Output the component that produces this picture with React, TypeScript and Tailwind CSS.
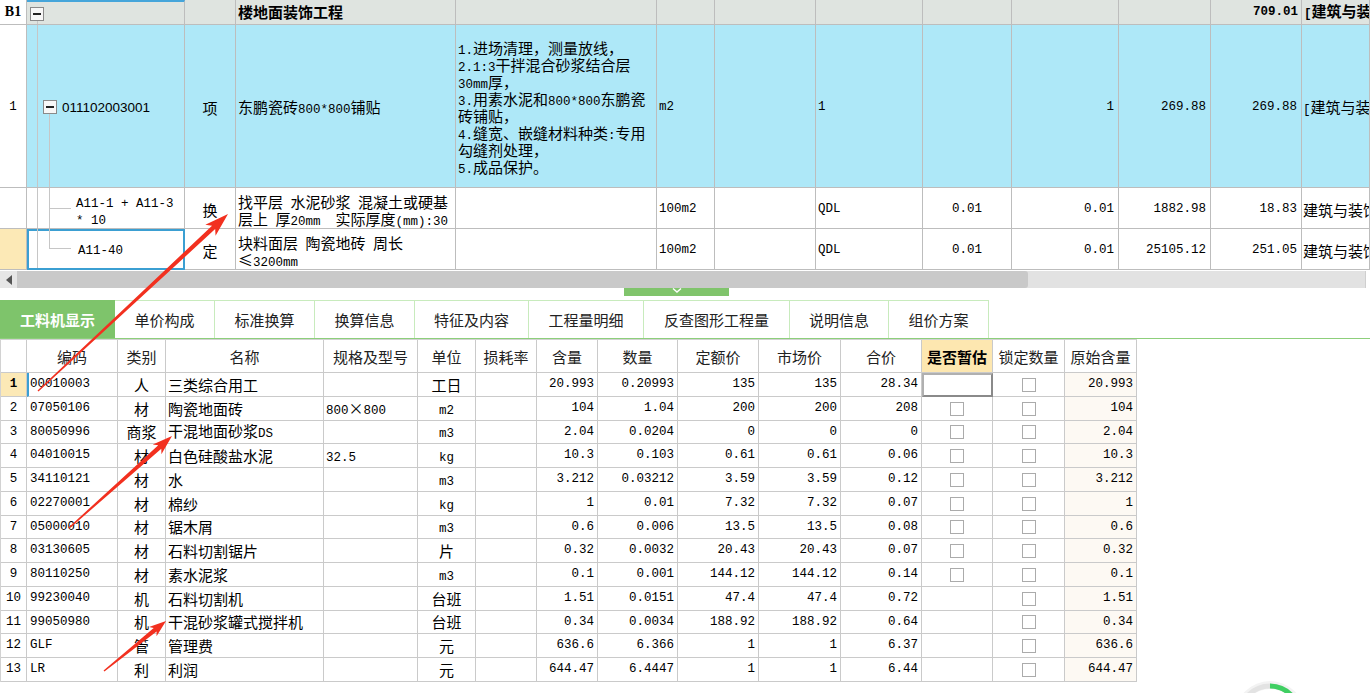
import React from "react";

const B = "border-r border-b border-[#bdbdbd]";
const BB = "border-r border-b border-[#cacaca]";

function Mx({ s, bold }: { s: string; bold?: boolean }) {
  const parts = s.match(/[\x20-\x7e]+|[^\x20-\x7e]+/g) || [];
  return (
    <span className="whitespace-pre">
      {parts.map((p, i) =>
        /^[\x20-\x7e]+$/.test(p) ? (
          <span
            key={i}
            className={
              bold
                ? "font-['Liberation_Mono',monospace] text-[12.5px] whitespace-pre font-bold"
                : "font-['Liberation_Mono',monospace] text-[12.5px] whitespace-pre"
            }
          >
            {p}
          </span>
        ) : (
          <span
            key={i}
            className={
              bold
                ? "font-['Noto_Sans_CJK_SC',sans-serif] text-[15px] font-bold"
                : "font-['Noto_Sans_CJK_SC',sans-serif] text-[15px]"
            }
          >
            {p}
          </span>
        )
      )}
    </span>
  );
}

function MinusBox() {
  return (
    <div className="w-[14px] h-[14px] border border-[#8a8a8a] bg-[#f7f7f7] flex items-center justify-center">
      <div className="w-[8px] h-[1.5px] bg-[#222]" />
    </div>
  );
}

function Arrow({ x1, y1, x2, y2, hl, hw }: { x1: number; y1: number; x2: number; y2: number; hl: number; hw: number }) {
  const dx = x2 - x1;
  const dy = y2 - y1;
  const L = Math.hypot(dx, dy);
  const ux = dx / L;
  const uy = dy / L;
  const nx = -uy;
  const ny = ux;
  const bx = x2 - ux * hl;
  const by = y2 - uy * hl;
  const nbx = x2 - ux * hl * 0.82;
  const nby = y2 - uy * hl * 0.82;
  const w0 = 1.4;
  const w1 = 4.6;
  const pts = [
    [x1 + (nx * w0) / 2, y1 + (ny * w0) / 2],
    [nbx + (nx * w1) / 2, nby + (ny * w1) / 2],
    [bx + (nx * hw) / 2, by + (ny * hw) / 2],
    [x2, y2],
    [bx - (nx * hw) / 2, by - (ny * hw) / 2],
    [nbx - (nx * w1) / 2, nby - (ny * w1) / 2],
    [x1 - (nx * w0) / 2, y1 - (ny * w0) / 2],
  ]
    .map((p) => p.join(","))
    .join(" ");
  return <polygon points={pts} fill="#f2301f" />;
}

function Check() {
  return <div className="w-[14px] h-[14px] border border-[#ababab] bg-white" />;
}

type Row = {
  n: string;
  code: string;
  t: string;
  name: string;
  spec: string;
  unit: string;
  hl: string;
  qty: string;
  de: string;
  sc: string;
  hj: string;
  zg: "focus" | "box" | "none";
  ys: string;
  h: "a" | "b";
};

const rows: Row[] = [
  { n: "1", code: "00010003", t: "人", name: "三类综合用工", spec: "", unit: "工日", hl: "20.993", qty: "0.20993", de: "135", sc: "135", hj: "28.34", zg: "focus", ys: "20.993", h: "a" },
  { n: "2", code: "07050106", t: "材", name: "陶瓷地面砖", spec: "800×800", unit: "m2", hl: "104", qty: "1.04", de: "200", sc: "200", hj: "208", zg: "box", ys: "104", h: "a" },
  { n: "3", code: "80050996", t: "商浆", name: "干混地面砂浆DS", spec: "", unit: "m3", hl: "2.04", qty: "0.0204", de: "0", sc: "0", hj: "0", zg: "box", ys: "2.04", h: "b" },
  { n: "4", code: "04010015", t: "材", name: "白色硅酸盐水泥", spec: "32.5", unit: "kg", hl: "10.3", qty: "0.103", de: "0.61", sc: "0.61", hj: "0.06", zg: "box", ys: "10.3", h: "a" },
  { n: "5", code: "34110121", t: "材", name: "水", spec: "", unit: "m3", hl: "3.212", qty: "0.03212", de: "3.59", sc: "3.59", hj: "0.12", zg: "box", ys: "3.212", h: "a" },
  { n: "6", code: "02270001", t: "材", name: "棉纱", spec: "", unit: "kg", hl: "1", qty: "0.01", de: "7.32", sc: "7.32", hj: "0.07", zg: "box", ys: "1", h: "a" },
  { n: "7", code: "05000010", t: "材", name: "锯木屑", spec: "", unit: "m3", hl: "0.6", qty: "0.006", de: "13.5", sc: "13.5", hj: "0.08", zg: "box", ys: "0.6", h: "b" },
  { n: "8", code: "03130605", t: "材", name: "石料切割锯片", spec: "", unit: "片", hl: "0.32", qty: "0.0032", de: "20.43", sc: "20.43", hj: "0.07", zg: "box", ys: "0.32", h: "a" },
  { n: "9", code: "80110250", t: "材", name: "素水泥浆", spec: "", unit: "m3", hl: "0.1", qty: "0.001", de: "144.12", sc: "144.12", hj: "0.14", zg: "box", ys: "0.1", h: "a" },
  { n: "10", code: "99230040", t: "机", name: "石料切割机", spec: "", unit: "台班", hl: "1.51", qty: "0.0151", de: "47.4", sc: "47.4", hj: "0.72", zg: "none", ys: "1.51", h: "a" },
  { n: "11", code: "99050980", t: "机", name: "干混砂浆罐式搅拌机", spec: "", unit: "台班", hl: "0.34", qty: "0.0034", de: "188.92", sc: "188.92", hj: "0.64", zg: "none", ys: "0.34", h: "b" },
  { n: "12", code: "GLF", t: "管", name: "管理费", spec: "", unit: "元", hl: "636.6", qty: "6.366", de: "1", sc: "1", hj: "6.37", zg: "none", ys: "636.6", h: "a" },
  { n: "13", code: "LR", t: "利", name: "利润", spec: "", unit: "元", hl: "644.47", qty: "6.4447", de: "1", sc: "1", hj: "6.44", zg: "none", ys: "644.47", h: "a" },
];

const tabs = [
  { t: "工料机显示", w: "w-[115px]" },
  { t: "单价构成", w: "w-[100px]" },
  { t: "标准换算", w: "w-[100px]" },
  { t: "换算信息", w: "w-[100px]" },
  { t: "特征及内容", w: "w-[114px]" },
  { t: "工程量明细", w: "w-[115px]" },
  { t: "反查图形工程量", w: "w-[146px]" },
  { t: "说明信息", w: "w-[99px]" },
  { t: "组价方案", w: "w-[100px]" },
];

const headers = ["", "编码", "类别", "名称", "规格及型号", "单位", "损耗率", "含量", "数量", "定额价", "市场价", "合价", "是否暂估", "锁定数量", "原始含量"];

const features = [
  "1.进场清理，测量放线，",
  "2.1:3干拌混合砂浆结合层",
  "30mm厚，",
  "3.用素水泥和800*800东鹏瓷",
  "砖铺贴，",
  "4.缝宽、嵌缝材料种类:专用",
  "勾缝剂处理，",
  "5.成品保护。",
];

export default function App() {
  const num = "font-['Liberation_Mono',monospace] text-[12.5px] text-black";
  return (
    <div className="relative w-[1370px] h-[693px] overflow-hidden bg-white text-black leading-none">
      {/* top table */}
      <div className="grid grid-cols-[27px_158px_51px_220px_201px_58px_101px_107px_89px_107px_92px_91px_68px] grid-rows-[25px_163px_41px_41px] w-[1370px] overflow-hidden">
        {/* header */}
        <div className={`${B} bg-white flex items-center justify-center`}>
          <span className="font-['Liberation_Serif',serif] font-bold text-[14px]">B1</span>
        </div>
        <div className={`${B} relative bg-[#dfe4e0] border-t-2 border-t-[#45a5da]`}>
          <div className="absolute left-[3px] top-[5px]">
            <MinusBox />
          </div>
          <div className="absolute left-[10px] top-[19px] bottom-0 w-px bg-[#c6c6c6]" />
        </div>
        <div className={`${B} bg-[#dfe4e0]`} />
        <div className={`${B} bg-[#dfe4e0] flex items-center pl-[2px]`}>
          <Mx s="楼地面装饰工程" bold />
        </div>
        <div className={`${B} bg-[#dfe4e0]`} />
        <div className={`${B} bg-[#dfe4e0]`} />
        <div className={`${B} bg-[#dfe4e0]`} />
        <div className={`${B} bg-[#dfe4e0]`} />
        <div className={`${B} bg-[#dfe4e0]`} />
        <div className={`${B} bg-[#dfe4e0]`} />
        <div className={`${B} bg-[#dfe4e0]`} />
        <div className={`${B} bg-[#dfe4e0] flex items-center justify-end pr-[3px]`}>
          <span className={`${num} font-bold`}>709.01</span>
        </div>
        <div className={`${B} bg-[#dfe4e0] flex items-center pl-[2px] whitespace-nowrap overflow-hidden`}>
          <Mx s="[建筑与装饰工程]" bold />
        </div>

        {/* row 1 */}
        <div className={`${B} bg-white flex items-center justify-center pt-[3px]`}>
          <span className={num}>1</span>
        </div>
        <div className={`${B} relative bg-[#aee8f8] flex items-center pl-[35px] pt-[3px]`}>
          <div className="absolute left-[10px] top-0 bottom-0 w-px bg-[#c6c6c6]" />
          <div className="absolute left-[16px] top-[75px]">
            <MinusBox />
          </div>
          <div className="absolute left-[22px] top-[89px] bottom-0 w-px bg-[#c6c6c6]" />
          <span className="font-['Liberation_Sans',sans-serif] text-[13.5px]">011102003001</span>
        </div>
        <div className={`${B} bg-[#aee8f8] flex items-center justify-center pt-[3px]`}>
          <Mx s="项" />
        </div>
        <div className={`${B} bg-[#aee8f8] flex items-center pl-[2px] pt-[3px]`}>
          <Mx s="东鹏瓷砖800*800铺贴" />
        </div>
        <div className={`${B} bg-[#aee8f8] flex flex-col justify-center pl-[2px] pt-[2px]`}>
          {features.map((f, i) => (
            <div key={i} className="h-[17px] leading-[17px] whitespace-nowrap">
              <Mx s={f} />
            </div>
          ))}
        </div>
        <div className={`${B} bg-[#aee8f8] flex items-center pl-[2px] pt-[3px]`}>
          <span className={num}>m2</span>
        </div>
        <div className={`${B} bg-[#aee8f8]`} />
        <div className={`${B} bg-[#aee8f8] flex items-center pl-[2px] pt-[3px]`}>
          <span className={num}>1</span>
        </div>
        <div className={`${B} bg-[#aee8f8]`} />
        <div className={`${B} bg-[#aee8f8] flex items-center justify-end pr-[4px] pt-[3px]`}>
          <span className={num}>1</span>
        </div>
        <div className={`${B} bg-[#aee8f8] flex items-center justify-end pr-[4px] pt-[3px]`}>
          <span className={num}>269.88</span>
        </div>
        <div className={`${B} bg-[#aee8f8] flex items-center justify-end pr-[4px] pt-[3px]`}>
          <span className={num}>269.88</span>
        </div>
        <div className={`${B} bg-[#aee8f8] flex items-center pl-[1px] whitespace-nowrap overflow-hidden pt-[3px]`}>
          <Mx s="[建筑与装饰工程]" />
        </div>

        {/* row 2 */}
        <div className={`${B} bg-white`} />
        <div className={`${B} relative bg-white flex flex-col justify-center pl-[49px] pt-[3px]`}>
          <div className="absolute left-[10px] top-0 bottom-0 w-px bg-[#c6c6c6]" />
          <div className="absolute left-[22px] top-0 bottom-0 w-px bg-[#c6c6c6]" />
          <div className="absolute left-[22px] top-[20px] w-[22px] h-px bg-[#c6c6c6]" />
          <div className="h-[17px] leading-[17px] whitespace-pre">
            <span className={num}>A11-1 + A11-3</span>
          </div>
          <div className="h-[17px] leading-[17px] whitespace-pre">
            <span className={num}>* 10</span>
          </div>
        </div>
        <div className={`${B} bg-white flex items-center justify-center pt-[3px]`}>
          <Mx s="换" />
        </div>
        <div className={`${B} bg-white flex flex-col justify-center pl-[2px] pt-[3px]`}>
          <div className="h-[17px] leading-[17px] whitespace-nowrap">
            <Mx s="找平层 水泥砂浆 混凝土或硬基" />
          </div>
          <div className="h-[17px] leading-[17px] whitespace-nowrap">
            <Mx s="层上 厚20mm  实际厚度(mm):30" />
          </div>
        </div>
        <div className={`${B} bg-white`} />
        <div className={`${B} bg-white flex items-center pl-[2px] pt-[3px]`}>
          <span className={num}>100m2</span>
        </div>
        <div className={`${B} bg-white`} />
        <div className={`${B} bg-white flex items-center pl-[2px] pt-[3px]`}>
          <span className={num}>QDL</span>
        </div>
        <div className={`${B} bg-white flex items-center justify-center pt-[3px]`}>
          <span className={num}>0.01</span>
        </div>
        <div className={`${B} bg-white flex items-center justify-end pr-[4px] pt-[3px]`}>
          <span className={num}>0.01</span>
        </div>
        <div className={`${B} bg-white flex items-center justify-end pr-[4px] pt-[3px]`}>
          <span className={num}>1882.98</span>
        </div>
        <div className={`${B} bg-white flex items-center justify-end pr-[4px] pt-[3px]`}>
          <span className={num}>18.83</span>
        </div>
        <div className={`${B} bg-white flex items-center pl-[1px] whitespace-nowrap overflow-hidden pt-[3px]`}>
          <Mx s="建筑与装饰工程" />
        </div>

        {/* row 3 */}
        <div className={`${B} bg-[#fce9b6]`} />
        <div className="relative bg-white flex items-center pl-[49px] pt-[4px] border-2 border-[#3b9fd2]">
          <div className="absolute left-[8px] -top-[2px] bottom-0 w-px bg-[#c6c6c6]" />
          <div className="absolute left-[20px] -top-[2px] h-[19px] w-px bg-[#c6c6c6]" />
          <div className="absolute left-[20px] top-[17px] w-[22px] h-px bg-[#c6c6c6]" />
          <span className={num}>A11-40</span>
        </div>
        <div className={`${B} bg-white flex items-center justify-center pt-[3px]`}>
          <Mx s="定" />
        </div>
        <div className={`${B} bg-white flex flex-col justify-center pl-[2px] pt-[3px]`}>
          <div className="h-[17px] leading-[17px] whitespace-nowrap">
            <Mx s="块料面层 陶瓷地砖 周长" />
          </div>
          <div className="h-[17px] leading-[17px] whitespace-nowrap">
            <Mx s="≤3200mm" />
          </div>
        </div>
        <div className={`${B} bg-white`} />
        <div className={`${B} bg-white flex items-center pl-[2px] pt-[3px]`}>
          <span className={num}>100m2</span>
        </div>
        <div className={`${B} bg-white`} />
        <div className={`${B} bg-white flex items-center pl-[2px] pt-[3px]`}>
          <span className={num}>QDL</span>
        </div>
        <div className={`${B} bg-white flex items-center justify-center pt-[3px]`}>
          <span className={num}>0.01</span>
        </div>
        <div className={`${B} bg-white flex items-center justify-end pr-[4px] pt-[3px]`}>
          <span className={num}>0.01</span>
        </div>
        <div className={`${B} bg-white flex items-center justify-end pr-[4px] pt-[3px]`}>
          <span className={num}>25105.12</span>
        </div>
        <div className={`${B} bg-white flex items-center justify-end pr-[4px] pt-[3px]`}>
          <span className={num}>251.05</span>
        </div>
        <div className={`${B} bg-white flex items-center pl-[1px] whitespace-nowrap overflow-hidden pt-[3px]`}>
          <Mx s="建筑与装饰工程" />
        </div>
      </div>

      {/* horizontal scrollbar */}
      <div className="flex h-[17px] mt-px bg-[#e2e2e2]">
        <div className="w-[17px] flex items-center justify-center bg-[#e6e6e6]">
          <div className="w-0 h-0 border-y-[5px] border-y-transparent border-r-[6px] border-r-[#555]" />
        </div>
        <div className="w-[1011px] bg-[#c9c9c9] rounded-r-[3px]" />
        <div className="flex-1" />
        <div className="w-[5px] bg-white border-l border-[#cfcfcf]" />
      </div>

      {/* splitter handle */}
      <div className="h-[12px] pl-[624px]">
        <div className="w-[105px] h-[8px] bg-[#80c46c] flex justify-center items-start">
          <svg width="14" height="6" viewBox="0 0 14 6">
            <path d="M3 0.5 L7 4 L11 0.5" stroke="#ffffff" strokeWidth="1.4" fill="none" />
          </svg>
        </div>
      </div>

      {/* tabs */}
      <div className="flex h-[39px] border-b border-[#8dcf7b]">
        {tabs.map((t, i) =>
          i === 0 ? (
            <div key={i} className={`${t.w} bg-[#7ec46b] flex items-center justify-center`}>
              <span className="font-['Noto_Sans_CJK_SC',sans-serif] text-[15px] font-bold text-white">{t.t}</span>
            </div>
          ) : (
            <div key={i} className={`${t.w} border-t border-r border-[#c8ebbd] flex items-center justify-center`}>
              <span className="font-['Noto_Sans_CJK_SC',sans-serif] text-[15px] text-[#222]">{t.t}</span>
            </div>
          )
        )}
      </div>

      {/* bottom table */}
      <div className="w-[1137px] border-l border-t border-[#d2d2d2]">
        <div className="grid grid-cols-[26px_91px_48px_158px_94px_58px_61px_61px_80px_81px_82px_81px_71px_72px_72px] h-[33px]">
          {headers.map((h, i) => (
            <div
              key={i}
              className={
                i === 12
                  ? `${BB} bg-[#fde7b0] flex items-center justify-center`
                  : `${BB} bg-white flex items-center justify-center`
              }
            >
              <span
                className={
                  i === 12
                    ? "font-['Noto_Sans_CJK_SC',sans-serif] text-[15px] font-bold text-black"
                    : "font-['Noto_Sans_CJK_SC',sans-serif] text-[15px] text-[#222]"
                }
              >
                {h}
              </span>
            </div>
          ))}
        </div>
        {rows.map((r, i) => (
          <div
            key={i}
            className={
              r.h === "a"
                ? "grid grid-cols-[26px_91px_48px_158px_94px_58px_61px_61px_80px_81px_82px_81px_71px_72px_72px] h-[24px]"
                : "grid grid-cols-[26px_91px_48px_158px_94px_58px_61px_61px_80px_81px_82px_81px_71px_72px_72px] h-[23px]"
            }
          >
            <div className={i === 0 ? `${BB} bg-[#fce9b6] flex items-center justify-center` : `${BB} flex items-center justify-center`}>
              <span className={i === 0 ? `${num} font-bold` : num}>{r.n}</span>
            </div>
            <div className={i === 0 ? `${BB} border-l-2 border-l-[#3b9fd2] flex items-center pl-[1px]` : `${BB} flex items-center pl-[3px]`}>
              <span className={num}>{r.code}</span>
            </div>
            <div className={`${BB} flex items-center justify-center`}>
              <Mx s={r.t} />
            </div>
            <div className={`${BB} flex items-center pl-[2px] whitespace-nowrap`}>
              <Mx s={r.name} />
            </div>
            <div className={`${BB} flex items-center pl-[2px] whitespace-nowrap`}>
              <Mx s={r.spec} />
            </div>
            <div className={`${BB} flex items-center justify-center`}>
              <Mx s={r.unit} />
            </div>
            <div className={BB} />
            <div className={`${BB} flex items-center justify-end pr-[3px]`}>
              <span className={num}>{r.hl}</span>
            </div>
            <div className={`${BB} flex items-center justify-end pr-[3px]`}>
              <span className={num}>{r.qty}</span>
            </div>
            <div className={`${BB} flex items-center justify-end pr-[3px]`}>
              <span className={num}>{r.de}</span>
            </div>
            <div className={`${BB} flex items-center justify-end pr-[3px]`}>
              <span className={num}>{r.sc}</span>
            </div>
            <div className={`${BB} flex items-center justify-end pr-[3px]`}>
              <span className={num}>{r.hj}</span>
            </div>
            {r.zg === "focus" ? (
              <div className="border-2 border-[#8a8a8a] border-t-[#b0b0b0] border-l-[#b0b0b0] bg-white" />
            ) : (
              <div className={`${BB} flex items-center justify-center`}>{r.zg === "box" ? <Check /> : null}</div>
            )}
            <div className={`${BB} flex items-center justify-center`}>
              <Check />
            </div>
            <div className={`${BB} bg-[#fdf9f3] flex items-center justify-end pr-[3px]`}>
              <span className={num}>{r.ys}</span>
            </div>
          </div>
        ))}
      </div>

      {/* annotation arrows */}
      <svg className="absolute left-0 top-0 pointer-events-none" width="1370" height="693" viewBox="0 0 1370 693">
        <Arrow x1={38} y1={391} x2={228} y2={214} hl={24} hw={15} />
        <Arrow x1={69} y1={528} x2={172} y2={436} hl={20} hw={13} />
        <Arrow x1={104} y1={671} x2={166} y2={621} hl={17} hw={12} />
      </svg>

      {/* floating widget bottom right */}
      <svg className="absolute left-[1230px] top-[676px] pointer-events-none" width="80" height="17" viewBox="0 0 80 17">
        <circle cx="40" cy="40" r="35" fill="#f3f3f3" />
        <circle cx="40" cy="40" r="30" fill="none" stroke="#e3e3e3" strokeWidth="5" />
        <path d="M40 10 A30 30 0 0 1 62 20" fill="none" stroke="#3fcf62" strokeWidth="5" />
        <circle cx="40" cy="40" r="27" fill="#ffffff" />
      </svg>
    </div>
  );
}
